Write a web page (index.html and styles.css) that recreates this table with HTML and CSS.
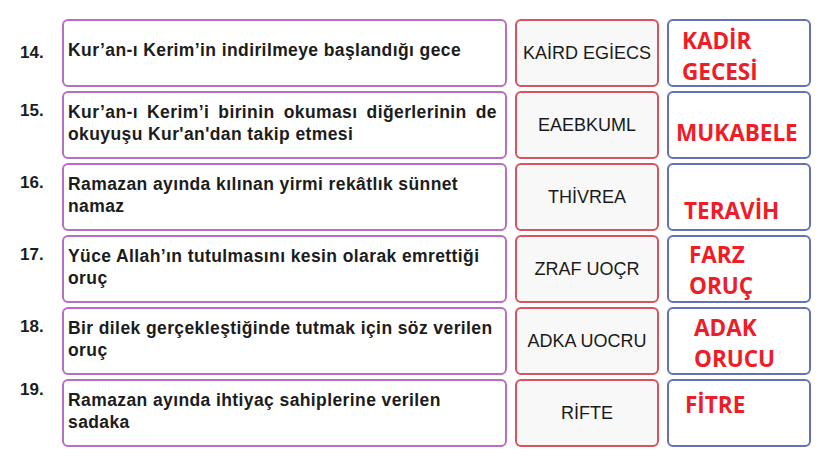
FILE: index.html
```html
<!DOCTYPE html>
<html lang="tr">
<head>
<meta charset="utf-8">
<title>Eşleştirme</title>
<link rel="stylesheet" href="styles.css">
</head>
<body>
<main class="sheet">
  <div class="num num--14">14.</div>
  <div class="q q--single">Kur’an-ı Kerim’in indirilmeye başlandığı gece</div>
  <div class="scramble">KAİRD EGİECS</div>
  <div class="ans"><span class="ans-text ans--kadir">KADİR<br>GECESİ</span></div>

  <div class="num">15.</div>
  <div class="q q--justify">Kur’an-ı Kerim’i birinin okuması diğerlerinin de okuyuşu Kur'an'dan takip etmesi</div>
  <div class="scramble">EAEBKUML</div>
  <div class="ans"><span class="ans-text ans--mukabele">MUKABELE</span></div>

  <div class="num">16.</div>
  <div class="q">Ramazan ayında kılınan yirmi rekâtlık sünnet namaz</div>
  <div class="scramble">THİVREA</div>
  <div class="ans"><span class="ans-text ans--teravih">TERAVİH</span></div>

  <div class="num">17.</div>
  <div class="q">Yüce Allah’ın tutulmasını kesin olarak emrettiği oruç</div>
  <div class="scramble">ZRAF UOÇR</div>
  <div class="ans"><span class="ans-text ans--farz">FARZ<br>ORUÇ</span></div>

  <div class="num">18.</div>
  <div class="q">Bir dilek gerçekleştiğinde tutmak için söz verilen oruç</div>
  <div class="scramble">ADKA UOCRU</div>
  <div class="ans"><span class="ans-text ans--adak">ADAK<br>ORUCU</span></div>

  <div class="num num--19">19.</div>
  <div class="q">Ramazan ayında ihtiyaç sahiplerine verilen sadaka</div>
  <div class="scramble">RİFTE</div>
  <div class="ans"><span class="ans-text ans--fitre">FİTRE</span></div>
</main>
</body>
</html>
```

FILE: styles.css
```css
html, body {
  margin: 0;
  padding: 0;
  background: #ffffff;
}

.sheet {
  display: grid;
  grid-template-columns: 54px 445px 144px 144px;
  grid-auto-rows: 68px;
  column-gap: 8px;
  row-gap: 4px;
  padding-top: 19px;
  font-family: "Liberation Sans", Arial, sans-serif;
  color: #1c1c1c;
}

.num {
  padding-left: 20px;
  padding-top: 9px;
  font-size: 17px;
  font-weight: bold;
  line-height: 22px;
}

.num--14 {
  padding-top: 23px;
}

.num--19 {
  padding-top: 0;
}

.q {
  box-sizing: border-box;
  border: 2px solid #b96ec5;
  border-radius: 6px;
  padding: 0 8px 4px 4px;
  display: flex;
  align-items: center;
  font-size: 17.5px;
  letter-spacing: 0.4px;
  font-weight: bold;
  line-height: 22.5px;
}

.q--justify {
  text-align: justify;
}

.q--single {
  padding-bottom: 6px;
}

.scramble {
  box-sizing: border-box;
  border: 2px solid #d8535f;
  border-radius: 6px;
  background: #f7f8f7;
  display: flex;
  align-items: center;
  justify-content: center;
  font-size: 18px;
  color: #1a1a1a;
}

.ans {
  box-sizing: border-box;
  border: 2px solid #6570bb;
  border-radius: 6px;
  display: flex;
  align-items: center;
  padding-left: 13px;
}

.ans-text {
  font-family: "Open Sans", sans-serif;
  font-weight: bold;
  font-size: 22.5px;
  line-height: 31px;
  color: #ee1d27;
}

.ans--kadir { margin-top: 6px; }
.ans--mukabele { margin-top: 14px; margin-left: -6px; }
.ans--teravih { margin-top: 26px; margin-left: 2px; }
.ans--farz { margin-top: 2px; margin-left: 7px; }
.ans--adak { margin-top: 4px; margin-left: 12px; }
.ans--fitre { margin-top: -17px; margin-left: 3px; }
```
